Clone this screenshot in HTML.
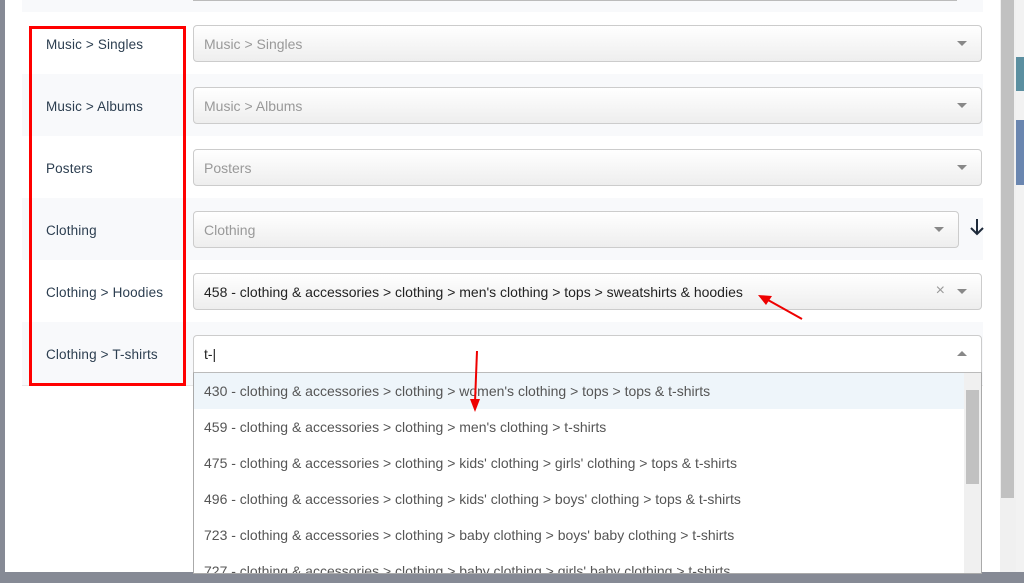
<!DOCTYPE html>
<html><head><style>
body{margin:0;width:1024px;height:583px;overflow:hidden;background:#868a95;font-family:"Liberation Sans",sans-serif;position:relative}
.modal{position:absolute;left:5px;top:0;width:995px;height:572px;background:#fff}
.sb{position:absolute;left:1000px;top:0;width:16px;height:572px;background:#f0f0f0}
.sb div{position:absolute;left:1px;top:0;width:13px;height:498px;background:#c1c1c1}
.page{position:absolute;left:1016px;top:0;width:8px;height:572px;background:#f2f2f2}
.row{position:absolute;left:22px;width:961px;height:62px}
.g{background:#f8f9fb}
.lab{position:absolute;left:46px;font-size:13.5px;color:#2c3e50;letter-spacing:0.15px}
.sel{position:absolute;left:193px;width:787px;height:35px;border:1px solid #ccc;border-radius:4px;background:linear-gradient(#fff,#eee);box-sizing:content-box}
.sel span{position:absolute;left:10px;top:10px;font-size:14px;color:#999}
.arr{position:absolute;right:14px;top:15px;width:0;height:0;border-left:5px solid transparent;border-right:5px solid transparent;border-top:5px solid #888}
.red{position:absolute;left:29px;top:26px;width:151px;height:354px;border:3px solid #f00}
.dd{position:absolute;left:193px;top:372px;width:787px;height:200px;border:1px solid #aaa;border-top:1px solid #bbb;background:#fff;overflow:hidden}
.opt{height:36px;line-height:36px;padding-left:10px;font-size:14px;color:#555}
</style></head><body>
<div class="modal"></div>
<div class="sb"><div></div></div>
<div class="page"><div style="position:absolute;top:57px;height:34px;width:8px;background:#5b8fa0"></div><div style="position:absolute;top:120px;height:65px;width:8px;background:#6a86b0"></div></div>
<div class="row g" style="top:0;height:12px"></div>
<div style="position:absolute;left:193px;top:0;width:764px;height:1px;background:#bbb"></div>
<div class="row" style="top:12px"></div>
<div class="row g" style="top:74px"></div>
<div class="row" style="top:136px"></div>
<div class="row g" style="top:198px"></div>
<div class="row" style="top:260px"></div>
<div class="row g" style="top:322px;height:63px;border-bottom:1px solid #e8e8e8"></div>

<div class="lab" style="top:37px">Music &gt; Singles</div>
<div class="lab" style="top:99px">Music &gt; Albums</div>
<div class="lab" style="top:161px">Posters</div>
<div class="lab" style="top:223px">Clothing</div>
<div class="lab" style="top:285px">Clothing &gt; Hoodies</div>
<div class="lab" style="top:347px">Clothing &gt; T-shirts</div>

<div class="sel" style="top:25px"><span>Music &gt; Singles</span><i class="arr"></i></div>
<div class="sel" style="top:87px"><span>Music &gt; Albums</span><i class="arr"></i></div>
<div class="sel" style="top:149px"><span>Posters</span><i class="arr"></i></div>
<div class="sel" style="top:211px;width:764px"><span>Clothing</span><i class="arr"></i></div>
<svg style="position:absolute;left:968px;top:218px" width="18" height="18"><path d="M9 1V16M3 10L9 16L15 10" stroke="#1e2a3a" stroke-width="2" fill="none"/></svg>
<div class="sel" style="top:273px"><span style="color:#222">458 - clothing &amp; accessories &gt; clothing &gt; men's clothing &gt; tops &gt; sweatshirts &amp; hoodies</span><b style="position:absolute;right:36px;top:8px;font-weight:normal;color:#999;font-size:16px">×</b><i class="arr"></i></div>
<div class="sel" style="top:335px;background:#fff;height:36px;border-radius:4px 4px 0 0"><span style="color:#222">t-|</span><i class="arr" style="border-top:0;border-bottom:5px solid #888"></i></div>
<div class="dd">
<div class="opt" style="background:#eef5fa">430 - clothing &amp; accessories &gt; clothing &gt; women's clothing &gt; tops &gt; tops &amp; t-shirts</div>
<div class="opt">459 - clothing &amp; accessories &gt; clothing &gt; men's clothing &gt; t-shirts</div>
<div class="opt">475 - clothing &amp; accessories &gt; clothing &gt; kids' clothing &gt; girls' clothing &gt; tops &amp; t-shirts</div>
<div class="opt">496 - clothing &amp; accessories &gt; clothing &gt; kids' clothing &gt; boys' clothing &gt; tops &amp; t-shirts</div>
<div class="opt">723 - clothing &amp; accessories &gt; clothing &gt; baby clothing &gt; boys' baby clothing &gt; t-shirts</div>
<div class="opt">727 - clothing &amp; accessories &gt; clothing &gt; baby clothing &gt; girls' baby clothing &gt; t-shirts</div>
<div style="position:absolute;right:0;top:0;width:17px;height:200px;background:#f0f0f0"><div style="position:absolute;left:2px;top:17px;width:13px;height:94px;background:#c1c1c1"></div></div>
</div>
<div class="red"></div>
<svg style="position:absolute;left:0;top:0" width="1024" height="583">
<line x1="802" y1="319" x2="768" y2="300" stroke="#e00" stroke-width="2"/>
<polygon points="758,295 772,296 766,305" fill="#e00"/>
<line x1="477" y1="351" x2="475" y2="402" stroke="#e00" stroke-width="2"/>
<polygon points="475,412 470,399 480,399" fill="#e00"/>
</svg>
</body></html>
